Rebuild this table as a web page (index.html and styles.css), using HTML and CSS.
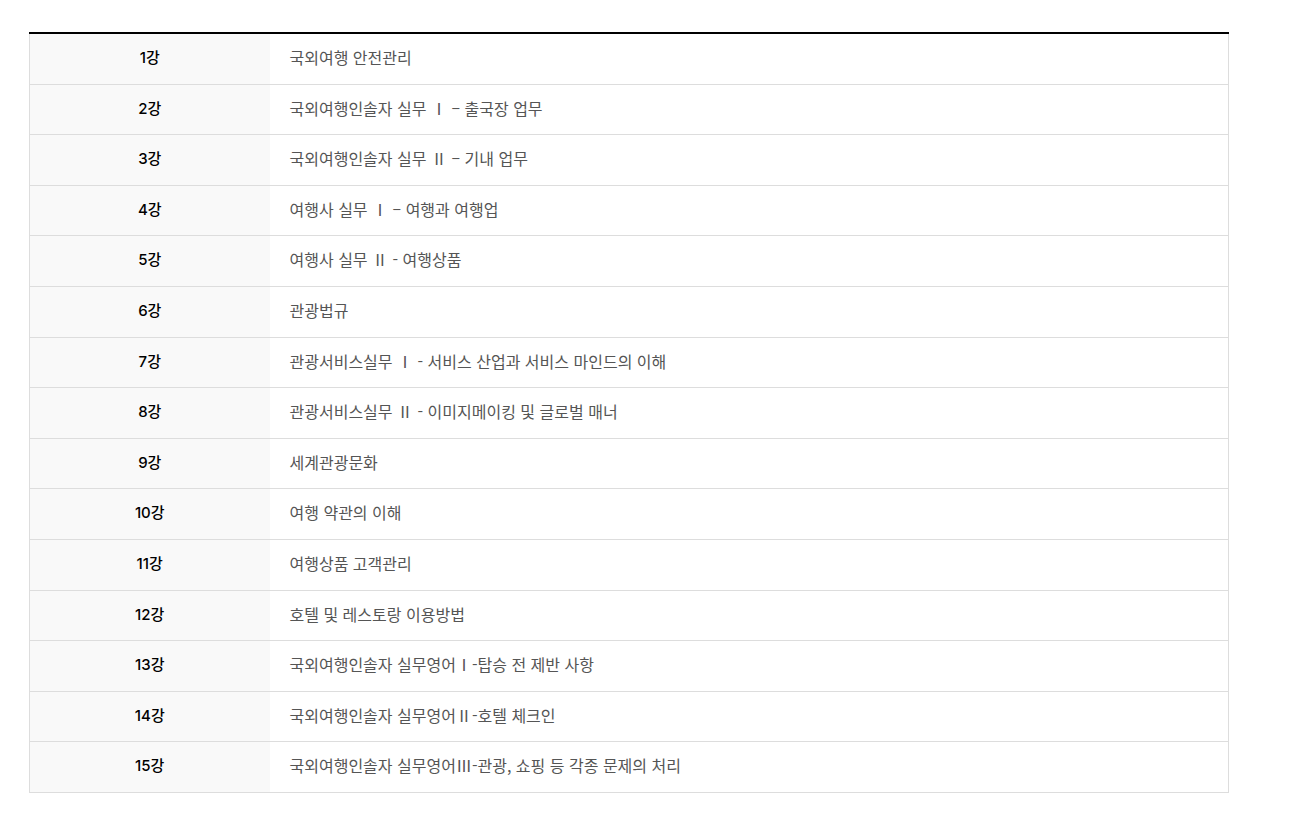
FILE: index.html
```html
<!DOCTYPE html>
<html lang="ko">
<head>
<meta charset="utf-8">
<link rel="stylesheet" href="styles.css">
</head>
<body>
<div class="wrap">
  <table class="curri">
    <tbody>
      <tr><th>1강</th><td>국외여행 안전관리</td></tr>
      <tr><th>2강</th><td>국외여행인솔자 실무 Ⅰ – 출국장 업무</td></tr>
      <tr><th>3강</th><td>국외여행인솔자 실무 Ⅱ – 기내 업무</td></tr>
      <tr><th>4강</th><td>여행사 실무 Ⅰ – 여행과 여행업</td></tr>
      <tr><th>5강</th><td>여행사 실무 Ⅱ - 여행상품</td></tr>
      <tr><th>6강</th><td>관광법규</td></tr>
      <tr><th>7강</th><td>관광서비스실무 Ⅰ - 서비스 산업과 서비스 마인드의 이해</td></tr>
      <tr><th>8강</th><td>관광서비스실무 Ⅱ - 이미지메이킹 및 글로벌 매너</td></tr>
      <tr><th>9강</th><td>세계관광문화</td></tr>
      <tr><th>10강</th><td>여행 약관의 이해</td></tr>
      <tr><th>11강</th><td>여행상품 고객관리</td></tr>
      <tr><th>12강</th><td>호텔 및 레스토랑 이용방법</td></tr>
      <tr><th>13강</th><td>국외여행인솔자 실무영어Ⅰ-탑승 전 제반 사항</td></tr>
      <tr><th>14강</th><td>국외여행인솔자 실무영어Ⅱ-호텔 체크인</td></tr>
      <tr><th>15강</th><td>국외여행인솔자 실무영어Ⅲ-관광, 쇼핑 등 각종 문제의 처리</td></tr>
    </tbody>
  </table>
</div>
</body>
</html>
```

FILE: styles.css
```css
* { box-sizing: border-box; }
html, body { margin: 0; padding: 0; background: #fff; }
.wrap { padding: 32px 0 0 29px; }
.curri {
  width: 1200px;
  border-collapse: collapse;
  border-top: 2px solid #000;
  border-left: 1px solid #ddd;
  border-right: 1px solid #ddd;
  line-height: 19.6px;
}
.curri th, .curri td {
  padding: 14px 20px 16px;
  border-bottom: 1px solid #ddd;
  vertical-align: middle;
}
.curri th {
  width: 240px;
  background: #f9f9f9;
  text-align: center;
  font-family: "Inter", "Noto Sans CJK KR", sans-serif;
  font-size: 15px;
  font-weight: 500;
  color: #000;
}
.curri td {
  text-align: left;
  font-family: "Noto Sans CJK KR", sans-serif;
  font-size: 16px;
  font-weight: 400;
  color: #555;
}
```
